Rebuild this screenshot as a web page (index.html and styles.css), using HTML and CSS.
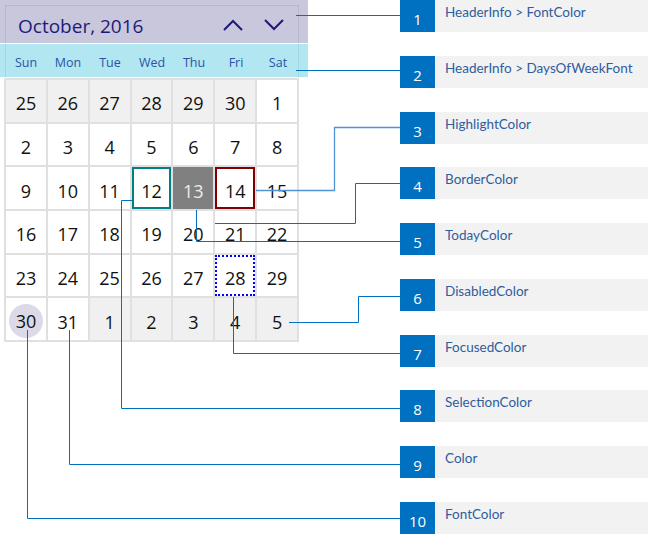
FILE: index.html
```html
<!DOCTYPE html>
<html lang="en">
<head>
  <meta charset="UTF-8">
  <title>Calendar colors</title>
  <link rel="stylesheet" href="styles.css">
</head>
<body>
  <div class="page">
    <div class="cal-area">
      <div class="hl-head">
        <div class="cal-head">
          <span class="month">October, 2016</span>
          <div class="nav">
            <svg width="20" height="12" viewBox="0 0 20 12"><polyline points="1,11 10,2 19,11" /></svg>
            <svg width="20" height="12" viewBox="0 0 20 12"><polyline points="1,1 10,10 19,1" /></svg>
          </div>
        </div>
      </div>
      <div class="hl-days">
        <div class="cal-days">
          <span>Sun</span><span>Mon</span><span>Tue</span><span>Wed</span><span>Thu</span><span>Fri</span><span>Sat</span>
        </div>
      </div>
      <div class="grid">
        <div class="cell other">25</div>
        <div class="cell other">26</div>
        <div class="cell other">27</div>
        <div class="cell other">28</div>
        <div class="cell other">29</div>
        <div class="cell other">30</div>
        <div class="cell">1</div>

        <div class="cell">2</div>
        <div class="cell">3</div>
        <div class="cell">4</div>
        <div class="cell">5</div>
        <div class="cell">6</div>
        <div class="cell">7</div>
        <div class="cell">8</div>

        <div class="cell">9</div>
        <div class="cell">10</div>
        <div class="cell">11</div>
        <div class="cell selected">12</div>
        <div class="cell today">13</div>
        <div class="cell highlight">14</div>
        <div class="cell">15</div>

        <div class="cell">16</div>
        <div class="cell">17</div>
        <div class="cell">18</div>
        <div class="cell">19</div>
        <div class="cell">20</div>
        <div class="cell">21</div>
        <div class="cell">22</div>

        <div class="cell">23</div>
        <div class="cell">24</div>
        <div class="cell">25</div>
        <div class="cell">26</div>
        <div class="cell">27</div>
        <div class="cell focused">28</div>
        <div class="cell">29</div>

        <div class="cell"><span class="dot">30</span></div>
        <div class="cell">31</div>
        <div class="cell other">1</div>
        <div class="cell other">2</div>
        <div class="cell other">3</div>
        <div class="cell other">4</div>
        <div class="cell other">5</div>
      </div>
    </div>

    <ul class="legend">
      <li><span class="num">1</span><span class="lbl">HeaderInfo &gt; FontColor</span></li>
      <li><span class="num">2</span><span class="lbl">HeaderInfo &gt; DaysOfWeekFont</span></li>
      <li><span class="num">3</span><span class="lbl">HighlightColor</span></li>
      <li><span class="num">4</span><span class="lbl">BorderColor</span></li>
      <li><span class="num">5</span><span class="lbl">TodayColor</span></li>
      <li><span class="num">6</span><span class="lbl">DisabledColor</span></li>
      <li><span class="num">7</span><span class="lbl">FocusedColor</span></li>
      <li><span class="num">8</span><span class="lbl">SelectionColor</span></li>
      <li><span class="num">9</span><span class="lbl">Color</span></li>
      <li><span class="num">10</span><span class="lbl">FontColor</span></li>
    </ul>

    <!-- leader lines from the calendar parts to the legend -->
    <svg class="leaders" width="648" height="534" viewBox="0 0 648 534">
      <path d="M296 15.5 H400" />
      <path d="M296 70.5 H400" />
      <path class="soft" d="M256 190.5 H334.5 V127.5 H400" />
      <path d="M215 223.5 H355.5 V183.5 H400" />
      <path d="M196.5 210 V241.5 H400" />
      <path d="M289 322.5 H358.5 V296.5 H400" />
      <path d="M233.5 297 V353.5 H400" />
      <path d="M132 200.5 H121.5 V408.5 H400" />
      <path d="M69.5 330 V464.5 H400" />
      <path d="M27.5 330 V518.5 H400" />
    </svg>
  </div>
</body>
</html>
```

FILE: styles.css
```css
body {
  margin: 0;
  font-family: "Open Sans", "Noto Sans", sans-serif;
  background: #fff;
}

.page {
  position: relative;
  display: flex;
  width: 648px;
  height: 534px;
}

.cal-area {
  flex: none;
  width: 400px;
}

/* highlighted header bands */
.hl-head {
  box-sizing: border-box;
  width: 308px;
  height: 43px;
  padding: 5px 0 0 5px;
  background: #c9c7dc;
}

.cal-head {
  box-sizing: border-box;
  width: 294px;
  height: 38px;
  border: 1px solid rgba(0, 0, 0, 0.08);
  border-bottom: none;
  display: flex;
  align-items: center;
  justify-content: space-between;
  padding: 2px 14px 0 12px;
}

.month {
  font-size: 19px;
  color: #1c1a7a;
}

.nav {
  display: flex;
  gap: 21px;
  padding-bottom: 1px;
}

.nav svg polyline {
  fill: none;
  stroke: #1c1a7a;
  stroke-width: 2;
}

.hl-days {
  box-sizing: border-box;
  width: 308px;
  height: 33px;
  margin-top: 1px;
  padding-left: 5px;
  background: #b2e6f0;
}

.cal-days {
  box-sizing: border-box;
  width: 294px;
  height: 33px;
  border-left: 1px solid rgba(0, 0, 0, 0.07);
  border-right: 1px solid rgba(0, 0, 0, 0.07);
  display: grid;
  grid-template-columns: repeat(7, 1fr);
  column-gap: 2px;
  align-items: center;
  padding-top: 3px;
  font-size: 12.5px;
  color: #2b54a6;
}

.cal-days span {
  text-align: center;
}

/* day grid */
.grid {
  box-sizing: border-box;
  width: 295px;
  height: 264px;
  margin: 1px 0 0 4px;
  padding: 2px;
  background: #e0e0e0;
  display: grid;
  grid-template-columns: repeat(7, 1fr);
  grid-template-rows: repeat(6, 1fr);
  gap: 2px;
}

.cell {
  box-sizing: border-box;
  display: flex;
  align-items: center;
  justify-content: center;
  padding-top: 5px;
  background: #fff;
  color: #111;
  font-size: 18px;
}

.cell.other {
  background: #f0f0f0;
}

.cell.selected {
  box-shadow: inset 0 0 0 2px #008080;
}

.cell.today {
  background: #808080;
  color: #ececec;
}

.cell.highlight {
  box-shadow: inset 0 0 0 2px #800000;
}

.cell.focused {
  border: 2px dotted #0000ff;
}

.dot {
  display: flex;
  align-items: center;
  justify-content: center;
  width: 34px;
  height: 34px;
  margin-top: -2px;
  border-radius: 50%;
  background: #dcdae8;
}

/* legend */
.legend {
  flex: 1;
  display: flex;
  flex-direction: column;
  justify-content: space-between;
  height: 534px;
  margin: 0;
  padding: 0;
  list-style: none;
}

.legend li {
  display: flex;
  height: 32px;
}

.num {
  box-sizing: border-box;
  width: 35px;
  background: #0070c0;
  color: #fff;
  font-size: 15px;
  display: flex;
  justify-content: center;
  align-items: flex-end;
  padding-bottom: 3px;
}

.lbl {
  flex: 1;
  background: #f2f2f2;
  padding: 4px 0 0 10px;
  font-family: Lato, "Open Sans", sans-serif;
  font-size: 13.5px;
  color: #2f5d9f;
}

.leaders {
  position: absolute;
  top: 0;
  left: 0;
  pointer-events: none;
}

.leaders path {
  fill: none;
  stroke: #0070c0;
  stroke-width: 1;
}

.leaders path.soft {
  stroke: #4f93d3;
  stroke-width: 1.3;
}
```
